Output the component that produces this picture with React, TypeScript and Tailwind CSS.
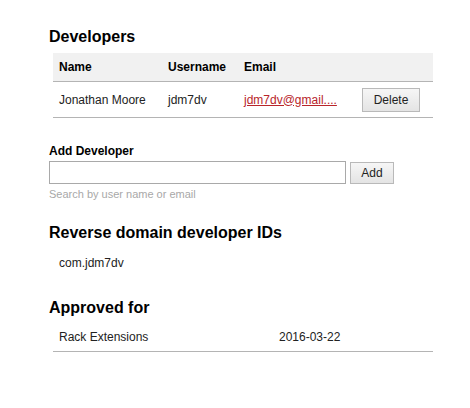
import React from "react";

const font = { fontFamily: '"Liberation Sans", Arial, sans-serif' };

export default function App() {
  return (
    <div className="w-[470px] h-[408px] bg-white text-[#222] pl-[49px] pt-[27px]" style={font}>
      {/* Developers */}
      <h2 className="text-[16px] leading-[20px] font-bold text-black">Developers</h2>
      <div className="ml-[4px] mt-[6px] w-[380px] text-[12px]">
        <div className="flex items-center h-[29px] bg-[#f1f1f1] border-b border-[#b4b4b4] font-bold text-black">
          <div className="w-[115px] pl-[6px]">Name</div>
          <div className="w-[76px]">Username</div>
          <div>Email</div>
        </div>
        <div className="flex items-center h-[36px] border-b border-[#b4b4b4]">
          <div className="w-[115px] pl-[6px]">Jonathan Moore</div>
          <div className="w-[76px]">jdm7dv</div>
          <a className="w-[118px] text-[#b8252a] underline">jdm7dv@gmail....</a>
          <button className="h-[24px] w-[58px] border border-[#b9b9b9] bg-gradient-to-b from-[#f6f6f6] to-[#e4e4e4] text-[12px] text-[#222]">
            Delete
          </button>
        </div>
      </div>

      {/* Add developer */}
      <div className="mt-[26px] text-[12px] leading-[15px] font-bold text-black">Add Developer</div>
      <div className="flex items-center gap-[4px] mt-[2px]">
        <input className="w-[297px] h-[23px] border border-[#a9a9a9] bg-white outline-none" />
        <button className="h-[22px] w-[44px] border border-[#b9b9b9] bg-gradient-to-b from-[#f6f6f6] to-[#e4e4e4] text-[12px] text-[#222]">
          Add
        </button>
      </div>
      <div className="mt-[3px] text-[11px] leading-[14px] text-[#a8a8a8]">Search by user name or email</div>

      {/* Reverse domain */}
      <h2 className="mt-[22px] text-[16px] leading-[20px] font-bold text-black">Reverse domain developer IDs</h2>
      <div className="mt-[13px] pl-[10px] text-[12px] leading-[15px]">com.jdm7dv</div>

      {/* Approved for */}
      <h2 className="mt-[27px] text-[16px] leading-[20px] font-bold text-black">Approved for</h2>
      <div className="ml-[4px] mt-[5px] w-[380px] text-[12px]">
        <div className="flex items-center h-[29px] border-b border-[#b4b4b4]">
          <div className="w-[226px] pl-[6px]">Rack Extensions</div>
          <div>2016-03-22</div>
        </div>
      </div>
    </div>
  );
}
